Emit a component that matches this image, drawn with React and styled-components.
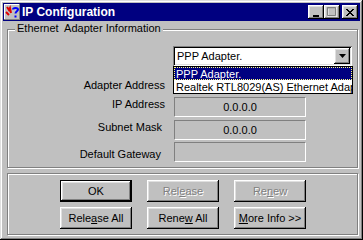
import React from "react";
import styled, { createGlobalStyle } from "styled-components";

const GlobalStyle = createGlobalStyle`
  body {
    margin: 0;
    background: #c0c0c0;
    font-family: "Liberation Sans", Arial, sans-serif;
    font-size: 11px;
    color: #000;
  }
`;

const raised = `
  box-shadow: inset -1px -1px #000, inset 1px 1px #fff,
    inset -2px -2px #808080, inset 2px 2px #dfdfdf;
`;

const Window = styled.div`
  width: 363px;
  height: 240px;
  box-sizing: border-box;
  padding: 3px;
  background: #c0c0c0;
  box-shadow: inset -1px -1px #000, inset 1px 1px #dfdfdf,
    inset -2px -2px #808080, inset 2px 2px #fff;
  display: flex;
  flex-direction: column;
`;

const TitleBar = styled.div`
  height: 18px;
  background: #000080;
  color: #fff;
  display: flex;
  align-items: center;
  padding: 0 2px 0 1px;
`;

const TitleText = styled.span`
  font-weight: bold;
  font-size: 12px;
  margin-left: 2px;
  flex: 1;
  line-height: 18px;
`;

const CaptionButton = styled.div`
  width: 16px;
  height: 14px;
  background: #c0c0c0;
  ${raised}
  display: flex;
  align-items: center;
  justify-content: center;
  margin-left: ${(p) => (p.$gap ? "2px" : "0")};
`;

const Body = styled.div`
  padding: 0 2px 0 4px;
  display: flex;
  flex-direction: column;
`;

const Group = styled.div`
  position: relative;
  border: 1px solid #808080;
  box-shadow: inset 1px 1px #fff, 1px 1px #fff;
  margin-top: ${(p) => p.$top}px;
  height: ${(p) => p.$height}px;
  box-sizing: border-box;
`;

const GroupLabel = styled.span`
  position: absolute;
  top: -8px;
  left: 7px;
  padding: 0 2px;
  background: #c0c0c0;
  line-height: 13px;
  white-space: pre;
`;

const InfoGrid = styled.div`
  display: grid;
  grid-template-columns: 157px 132px;
  column-gap: 9px;
  align-items: start;
  padding-top: 16px;
`;

const Label = styled.div`
  text-align: right;
  line-height: 13px;
  padding-right: ${(p) => p.$inset || 0}px;
  margin-top: ${(p) => p.$top}px;
`;

const Field = styled.div`
  height: 20px;
  box-sizing: border-box;
  border-top: 1px solid #808080;
  border-left: 1px solid #808080;
  border-bottom: 1px solid #fff;
  border-right: 1px solid #fff;
  margin-top: ${(p) => p.$top}px;
  display: flex;
  align-items: center;
  justify-content: center;
  line-height: 13px;
`;

const ComboWrap = styled.div`
  position: relative;
  margin-left: -1px;
  width: 179px;
`;

const Combo = styled.div`
  height: 20px;
  box-sizing: border-box;
  background: #fff;
  box-shadow: inset 1px 1px #808080, inset -1px -1px #fff,
    inset 2px 2px #000, inset -2px -2px #dfdfdf;
  display: flex;
  align-items: center;
  padding: 2px 2px 2px 4px;
`;

const ComboText = styled.span`
  flex: 1;
  line-height: 13px;
`;

const ArrowButton = styled.div`
  width: 16px;
  height: 16px;
  background: #c0c0c0;
  ${raised}
  display: flex;
  align-items: center;
  justify-content: center;
`;

const DropList = styled.div`
  position: absolute;
  top: 20px;
  left: 0;
  width: 180px;
  height: 28px;
  box-sizing: border-box;
  border: 1px solid #000;
  background: #fff;
  overflow: hidden;
  z-index: 2;
`;

const DropItem = styled.div`
  height: 13px;
  line-height: 12px;
  box-sizing: border-box;
  padding-left: 1px;
  white-space: nowrap;
  background: ${(p) => (p.$active ? "#000080" : "#fff")};
  color: ${(p) => (p.$active ? "#fff" : "#000")};
  border: 1px dotted ${(p) => (p.$active ? "#ffff7f" : "transparent")};
`;

const ButtonGrid = styled.div`
  display: grid;
  grid-template-columns: repeat(3, 72px);
  column-gap: 15px;
  row-gap: 5px;
  justify-content: center;
  padding-top: 6px;
  padding-left: 1px;
`;

const Button = styled.div`
  height: 22px;
  box-sizing: border-box;
  background: #c0c0c0;
  display: flex;
  align-items: center;
  justify-content: center;
  line-height: 13px;
  ${(p) =>
    p.$default
      ? `box-shadow: inset 0 0 0 1px #000, inset -2px -2px #000, inset 2px 2px #fff,
          inset -3px -3px #808080, inset 3px 3px #dfdfdf;`
      : raised}
  color: ${(p) => (p.$disabled ? "#808080" : "#000")};
  text-shadow: ${(p) => (p.$disabled ? "1px 1px #fff" : "none")};
`;

const Caption = styled.span`
  white-space: pre;
`;

const TitleIcon = () => (
  <svg width="16" height="16" viewBox="0 0 16 16">
    <rect x="0" y="0" width="16" height="16" fill="#c0c0c0" />
    <path d="M0 0h15v1H1v14H0z" fill="#fff" />
    <path d="M15 0h1v16H0v-1h15z" fill="#808080" />
    <path d="M3 3l2 3 1-2 1 5M2 8l3 3" stroke="#e00000" strokeWidth="2" fill="none" />
    <path
      d="M9 5.5c0-2 5-2 5 0 0 1.6-2.5 1.8-2.5 4M11.5 11.5v2"
      stroke="#0000ff"
      strokeWidth="2"
      fill="none"
    />
  </svg>
);

const MinIcon = () => (
  <svg width="8" height="8" viewBox="0 0 8 8" style={{ marginTop: 2 }}>
    <rect x="1" y="6" width="6" height="2" fill="#000" />
  </svg>
);

const MaxIcon = () => (
  <svg width="10" height="10" viewBox="0 0 10 10">
    <path d="M1 1h9v9H1z" fill="none" stroke="#fff" />
    <path d="M0.5 0.5h8v8h-8zM0 1h9" fill="none" stroke="#808080" />
  </svg>
);

const CloseIcon = () => (
  <svg width="8" height="7" viewBox="0 0 8 7">
    <path
      d="M0 0h2v1h1v1h2V1h1V0h2v1H7v1H6v1H5v1h1v1h1v1h1v1H6V6H5V5H3v1H2v1H0V6h1V5h1V4h1V3H2V2H1V1H0z"
      fill="#000"
    />
  </svg>
);

const DownArrow = () => (
  <svg width="7" height="4" viewBox="0 0 7 4">
    <path d="M0 0h7L3.5 4z" fill="#000" />
  </svg>
);

export default function App() {
  return (
    <>
      <GlobalStyle />
      <Window>
        <TitleBar>
          <TitleIcon />
          <TitleText>IP Configuration</TitleText>
          <CaptionButton>
            <MinIcon />
          </CaptionButton>
          <CaptionButton>
            <MaxIcon />
          </CaptionButton>
          <CaptionButton $gap>
            <CloseIcon />
          </CaptionButton>
        </TitleBar>
        <Body>
          <Group $top={8} $height={139}>
            <GroupLabel>Ethernet  Adapter Information</GroupLabel>
            <InfoGrid>
              <div />
              <ComboWrap>
                <Combo>
                  <ComboText>PPP Adapter.</ComboText>
                  <ArrowButton>
                    <DownArrow />
                  </ArrowButton>
                </Combo>
                <DropList>
                  <DropItem $active>PPP Adapter.</DropItem>
                  <DropItem>Realtek RTL8029(AS) Ethernet Adapter</DropItem>
                </DropList>
              </ComboWrap>

              <Label $top={13}>Adapter Address</Label>
              <Field $top={5} />

              <Label $top={6}>IP Address</Label>
              <Field $top={5}>0.0.0.0</Field>

              <Label $top={4} $inset={3}>Subnet Mask</Label>
              <Field $top={3}>0.0.0.0</Field>

              <Label $top={8} $inset={4}>Default Gateway</Label>
              <Field $top={2} />
            </InfoGrid>
          </Group>
          <Group $top={5} $height={62}>
            <ButtonGrid>
              <Button $default>
                <Caption>OK</Caption>
              </Button>
              <Button $disabled>
                <Caption>
                  Rel<u>e</u>ase
                </Caption>
              </Button>
              <Button $disabled>
                <Caption>
                  Re<u>n</u>ew
                </Caption>
              </Button>
              <Button>
                <Caption>
                  Rele<u>a</u>se All
                </Caption>
              </Button>
              <Button>
                <Caption>
                  Rene<u>w</u>{" "}All
                </Caption>
              </Button>
              <Button>
                <Caption>
                  <u>M</u>ore Info &gt;&gt;
                </Caption>
              </Button>
            </ButtonGrid>
          </Group>
        </Body>
      </Window>
    </>
  );
}
